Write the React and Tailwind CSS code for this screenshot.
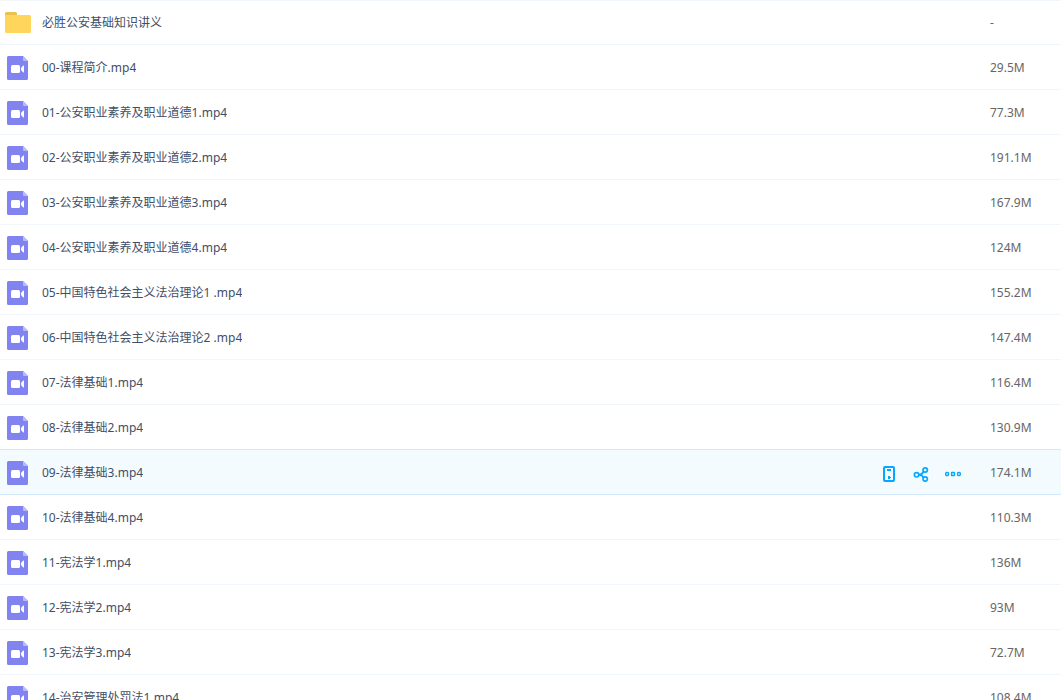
import React, { useState } from 'react';

const FILES = [
  { name: '必胜公安基础知识讲义', size: '-', folder: true },
  { name: '00-课程简介.mp4', size: '29.5M' },
  { name: '01-公安职业素养及职业道德1.mp4', size: '77.3M' },
  { name: '02-公安职业素养及职业道德2.mp4', size: '191.1M' },
  { name: '03-公安职业素养及职业道德3.mp4', size: '167.9M' },
  { name: '04-公安职业素养及职业道德4.mp4', size: '124M' },
  { name: '05-中国特色社会主义法治理论1 .mp4', size: '155.2M' },
  { name: '06-中国特色社会主义法治理论2 .mp4', size: '147.4M' },
  { name: '07-法律基础1.mp4', size: '116.4M' },
  { name: '08-法律基础2.mp4', size: '130.9M' },
  { name: '09-法律基础3.mp4', size: '174.1M' },
  { name: '10-法律基础4.mp4', size: '110.3M' },
  { name: '11-宪法学1.mp4', size: '136M' },
  { name: '12-宪法学2.mp4', size: '93M' },
  { name: '13-宪法学3.mp4', size: '72.7M' },
  { name: '14-治安管理处罚法1.mp4', size: '108.4M' },
];

function FolderIcon() {
  return (
    <svg width="26" height="21" viewBox="0 0 26 21" aria-hidden="true">
      <path d="M0 1.5A1.5 1.5 0 0 1 1.5 0h9A1.5 1.5 0 0 1 12 1.5V6H0z" fill="#ecc04a" />
      <path d="M0 3h24.5A1.5 1.5 0 0 1 26 4.5v15a1.5 1.5 0 0 1-1.5 1.5h-23A1.5 1.5 0 0 1 0 19.5z" fill="#ffd55c" />
    </svg>
  );
}

function VideoIcon() {
  return (
    <svg width="22" height="24" viewBox="0 0 22 24" aria-hidden="true">
      <path d="M1.5 0H16l5 5v17.5a1.5 1.5 0 0 1-1.5 1.5h-18A1.5 1.5 0 0 1 0 22.5v-21A1.5 1.5 0 0 1 1.5 0z" fill="#8183f1" />
      <path d="M16 0l5 5h-4a1 1 0 0 1-1-1z" fill="#b9baf8" />
      <rect x="4" y="9" width="9" height="8" rx="1.5" fill="#fff" />
      <path d="M14 12l2.2-2.4c.4-.4.8-.2.8.3v6.2c0 .5-.4.7-.8.3L14 14z" fill="#fff" />
    </svg>
  );
}

function PhoneIcon() {
  return (
    <svg width="16" height="16" viewBox="0 0 16 16" fill="none" stroke="#06a7ff" aria-hidden="true">
      <rect x="3" y="1" width="10" height="14" rx="1" strokeWidth="2" />
      <path d="M6 4h4" strokeWidth="2" />
      <path d="M7 10h2v1h1v1H9v1H7z" fill="#06a7ff" stroke="none" />
    </svg>
  );
}

function ShareIcon() {
  return (
    <svg width="16" height="16" viewBox="0 0 16 16" fill="none" stroke="#06a7ff" strokeWidth="1.7" aria-hidden="true">
      <circle cx="3.6" cy="8.8" r="2.2" />
      <circle cx="12.2" cy="4" r="2.2" />
      <circle cx="12.2" cy="13" r="2.2" />
      <path d="M5.8 8.8c2.4 0 3.8-1.2 4.6-3.2M5.8 8.8c2.4 0 3.8 1 4.6 2.8" />
    </svg>
  );
}

function MoreIcon() {
  return (
    <svg width="16" height="16" viewBox="0 0 16 16" fill="none" stroke="#06a7ff" strokeWidth="1.4" aria-hidden="true">
      <rect x="0.7" y="6.5" width="2.8" height="3" rx="1" />
      <rect x="6.6" y="6.5" width="2.8" height="3" rx="0.2" />
      <rect x="12.5" y="6.5" width="2.8" height="3" rx="1" />
    </svg>
  );
}

function FileRow({ file, first, active, beforeActive, onSelect }) {
  // the line above the selected row belongs to the row before it
  const border = active || beforeActive ? 'border-b-[#d4e9fb]' : 'border-b-[#f1f6fd]';
  const cell = `border-b ${border} ${first ? 'border-t border-t-[#f1f6fd]' : 'pt-0.5'}`;

  return (
    <tr className={active ? 'h-[45px] bg-[#f3fbff]' : 'h-[45px] bg-white'} onClick={onSelect}>
      <td className={cell}>
        <div className="flex items-center gap-1.5">
          <span className="flex w-9 shrink-0 items-center justify-center">
            {file.folder ? <FolderIcon /> : <VideoIcon />}
          </span>
          <a href="#file" className="truncate text-[#424e67]">{file.name}</a>
        </div>
      </td>
      <td className={cell}>
        {active && (
          <div className="flex gap-4 pl-[11px] pt-0.5">
            <button type="button" aria-label="发送到手机"><PhoneIcon /></button>
            <button type="button" aria-label="分享"><ShareIcon /></button>
            <button type="button" aria-label="更多"><MoreIcon /></button>
          </div>
        )}
      </td>
      <td className={`text-[#666] ${cell}`}>{file.size}</td>
    </tr>
  );
}

function App() {
  const [selected, setSelected] = useState(10);

  return (
    <main className="h-screen overflow-hidden bg-white font-['Noto_Sans','Noto_Sans_CJK_SC',sans-serif] text-xs">
      <table className="w-full table-fixed border-separate border-spacing-0">
        <colgroup>
          <col />
          <col className="w-[120px]" />
          <col className="w-[71px]" />
        </colgroup>
        <tbody>
          {FILES.map((file, i) => (
            <FileRow
              key={file.name}
              file={file}
              first={i === 0}
              active={i === selected}
              beforeActive={i === selected - 1}
              onSelect={() => setSelected(i)}
            />
          ))}
        </tbody>
      </table>
    </main>
  );
}

export default App;
